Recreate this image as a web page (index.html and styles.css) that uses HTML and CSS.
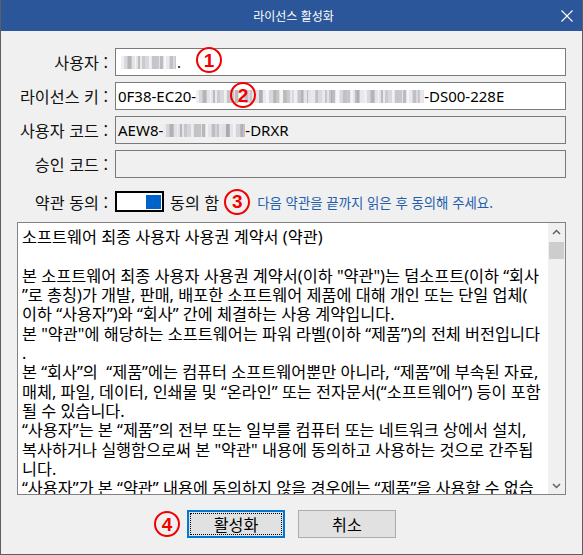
FILE: index.html
```html
<!DOCTYPE html>
<html lang="ko">
<head>
<meta charset="utf-8">
<title>라이선스 활성화</title>
<link rel="stylesheet" href="styles.css">
</head>
<body>
<div class="window">
  <div class="titlebar">
    <span></span>
    <span class="title">라이선스 활성화</span>
    <svg class="close" width="12" height="12" viewBox="0 0 12 12"><path d="M0.5 0.5 L11.5 11.5 M11.5 0.5 L0.5 11.5" stroke="#fff" stroke-width="1.1" fill="none"/></svg>
  </div>
  <div class="content">
    <div class="form">
      <div class="label">사용자 :</div>
      <div class="field white">
        <span class="blur b-user"></span><span class="dot">.</span>
        <span class="mark m1">1</span>
      </div>
      <div class="label">라이선스 키 :</div>
      <div class="field white">
        <span>0F38-EC20-</span><span class="blur b-key"></span><span>-DS00-228E</span>
        <span class="mark m2">2</span>
      </div>
      <div class="label">사용자 코드 :</div>
      <div class="field">
        <span>AEW8-</span><span class="blur b-code"></span><span>-DRXR</span>
      </div>
      <div class="label">승인 코드 :</div>
      <div class="field"></div>
      <div class="label agree-label">약관 동의 :</div>
      <div class="agree">
        <span class="toggle"><span class="knob"></span></span>
        <span class="agree-text">동의 함</span>
        <span class="mark inline">3</span>
        <span class="note">다음 약관을 끝까지 읽은 후 동의해 주세요.</span>
      </div>
    </div>
    <div class="terms">
      <div class="text">
        <div class="line">소프트웨어 최종 사용자 사용권 계약서 (약관)</div>
        <div class="line">&nbsp;</div>
        <div class="line">본 소프트웨어 최종 사용자 사용권 계약서(이하 "약관")는 덤소프트(이하 “회사</div>
        <div class="line">”로 총칭)가 개발, 판매, 배포한 소프트웨어 제품에 대해 개인 또는 단일 업체(</div>
        <div class="line">이하 “사용자”)와 “회사” 간에 체결하는 사용 계약입니다.</div>
        <div class="line">본 "약관"에 해당하는 소프트웨어는 파워 라벨(이하 “제품”)의 전체 버전입니다</div>
        <div class="line">.</div>
        <div class="line">본 “회사”의 &nbsp;“제품”에는 컴퓨터 소프트웨어뿐만 아니라, “제품”에 부속된 자료,</div>
        <div class="line">매체, 파일, 데이터, 인쇄물 및 “온라인” 또는 전자문서(“소프트웨어”) 등이 포함</div>
        <div class="line">될 수 있습니다.</div>
        <div class="line">“사용자”는 본 “제품”의 전부 또는 일부를 컴퓨터 또는 네트워크 상에서 설치,</div>
        <div class="line">복사하거나 실행함으로써 본 "약관" 내용에 동의하고 사용하는 것으로 간주됩</div>
        <div class="line">니다.</div>
        <div class="line">“사용자”가 본 “약관” 내용에 동의하지 않을 경우에는 “제품”을 사용할 수 없습</div>
      </div>
      <div class="scrollbar">
        <div class="arrow">
          <svg width="9" height="6" viewBox="0 0 9 6"><path d="M1 5 L4.5 1.5 L8 5" stroke="#606060" stroke-width="1.5" fill="none"/></svg>
        </div>
        <div class="thumb"></div>
        <div class="track"></div>
        <div class="arrow">
          <svg width="9" height="6" viewBox="0 0 9 6"><path d="M1 1 L4.5 4.5 L8 1" stroke="#606060" stroke-width="1.5" fill="none"/></svg>
        </div>
      </div>
    </div>
    <div class="buttons">
      <button class="btn primary"><span class="mark m4">4</span>활성화</button>
      <button class="btn">취소</button>
    </div>
  </div>
</div>
</body>
</html>
```
FILE: styles.css
```css
* { box-sizing: border-box; }
html, body { margin: 0; padding: 0; }
body {
  font-family: "Noto Sans", "Noto Sans CJK KR", sans-serif;
  background: #f0f0f0;
}
.window {
  width: 583px;
  height: 555px;
  border: 1px solid #5e5e5e;
  border-top: none;
  background: #f0f0f0;
  display: flex;
  flex-direction: column;
  overflow: hidden;
}
.titlebar {
  height: 31px;
  background: #2b579a;
  display: grid;
  grid-template-columns: 1fr auto 1fr;
  align-items: center;
  margin: 0 -1px;
}
.title {
  color: #fff;
  font-size: 12px;
  font-family: "Noto Sans CJK KR", sans-serif;
  line-height: 31px;
  padding-left: 4px;
}
.close {
  justify-self: end;
  margin-right: 10px;
  margin-top: 1px;
}
.content {
  padding: 17px 16px 0 16px;
  display: flex;
  flex-direction: column;
}
.form {
  display: grid;
  grid-template-columns: 91px 1fr;
  column-gap: 7px;
  row-gap: 6px;
}
.label {
  text-align: right;
  align-self: center;
  font-size: 16.2px;
  color: #111;
  font-family: "Noto Sans CJK KR", sans-serif;
  line-height: 20px;
  white-space: nowrap;
}
.field {
  position: relative;
  height: 28px;
  border: 1px solid #7a7a7a;
  background: #f0f0f0;
  display: flex;
  align-items: center;
  padding-left: 2px;
  font-size: 15px;
  color: #000;
  white-space: nowrap;
}
.field.white { background: #fff; }
.blur {
  display: inline-block;
  height: 13px;
  opacity: 0.75;
  background:
    repeating-linear-gradient(90deg, rgba(255,255,255,0.6) 0 3px, transparent 3px 7px, rgba(120,110,110,0.35) 7px 10px, transparent 10px 14px),
    repeating-linear-gradient(90deg, #c9cdd6 0 6px, #b8b2b4 6px 11px, #d7dce4 11px 15px, #a9a5a8 15px 19px, #dfe2e6 19px 24px);
}
.b-user { width: 55px; margin-left: 3px; }
.dot { margin-left: 1px; }
.b-key { width: 228px; }
.b-code { width: 82px; }
.mark {
  display: inline-flex;
  align-items: center;
  justify-content: center;
  width: 26px;
  height: 26px;
  border: 2px solid #f20000;
  border-radius: 50%;
  color: #f20000;
  font-family: "Liberation Sans", Arial, sans-serif;
  font-weight: bold;
  font-size: 19px;
  line-height: 1;
}
.field .mark, .btn .mark { position: absolute; }
.m1 { left: 80px; top: -2px; }
.m2 { left: 114px; top: -1px; }
.agree-label { margin-top: 7px; }
.agree {
  margin-top: 7px;
  height: 21px;
  display: flex;
  align-items: center;
  white-space: nowrap;
}
.toggle {
  width: 49px;
  height: 21px;
  border: 2px solid #000;
  background: #fff;
  display: flex;
  justify-content: flex-end;
  align-items: center;
  padding-right: 1px;
}
.knob {
  width: 15px;
  height: 14px;
  background: #0063c8;
}
.agree-text {
  margin-left: 6px;
  font-size: 16.2px;
  color: #111;
  font-family: "Noto Sans CJK KR", sans-serif;
}
.mark.inline { margin-left: 5px; }
.note {
  margin-left: 7px;
  font-size: 13.4px;
  color: #1f5fae;
  font-family: "Noto Sans CJK KR", sans-serif;
}
.terms {
  margin-top: 10px;
  height: 273px;
  border: 1px solid #828282;
  background: #fff;
  display: flex;
  overflow: hidden;
}
.text {
  flex: 1;
  padding: 5px 0 0 4px;
  font-size: 16.3px;
  line-height: 19.35px;
  color: #000;
  white-space: nowrap;
  overflow: hidden;
}
.scrollbar {
  width: 17px;
  background: #f0f0f0;
  display: flex;
  flex-direction: column;
  align-items: center;
}
.arrow {
  height: 17px;
  width: 17px;
  display: flex;
  align-items: center;
  justify-content: center;
}
.thumb {
  width: 15px;
  height: 17px;
  background: #cdcdcd;
  margin-top: 2px;
}
.track { flex: 1; }
.buttons {
  margin-top: 15px;
  display: flex;
  justify-content: center;
  gap: 13px;
}
.btn {
  position: relative;
  width: 98px;
  height: 28px;
  background: #e1e1e1;
  border: 1px solid #adadad;
  font-family: "Noto Sans CJK KR", sans-serif;
  font-size: 16.2px;
  color: #000;
  padding: 0;
}
.btn.primary {
  border: 2px solid #0078d7;
  outline: 1px dotted #000;
  outline-offset: -4px;
}
.m4 { left: -35px; top: -1px; }
```
